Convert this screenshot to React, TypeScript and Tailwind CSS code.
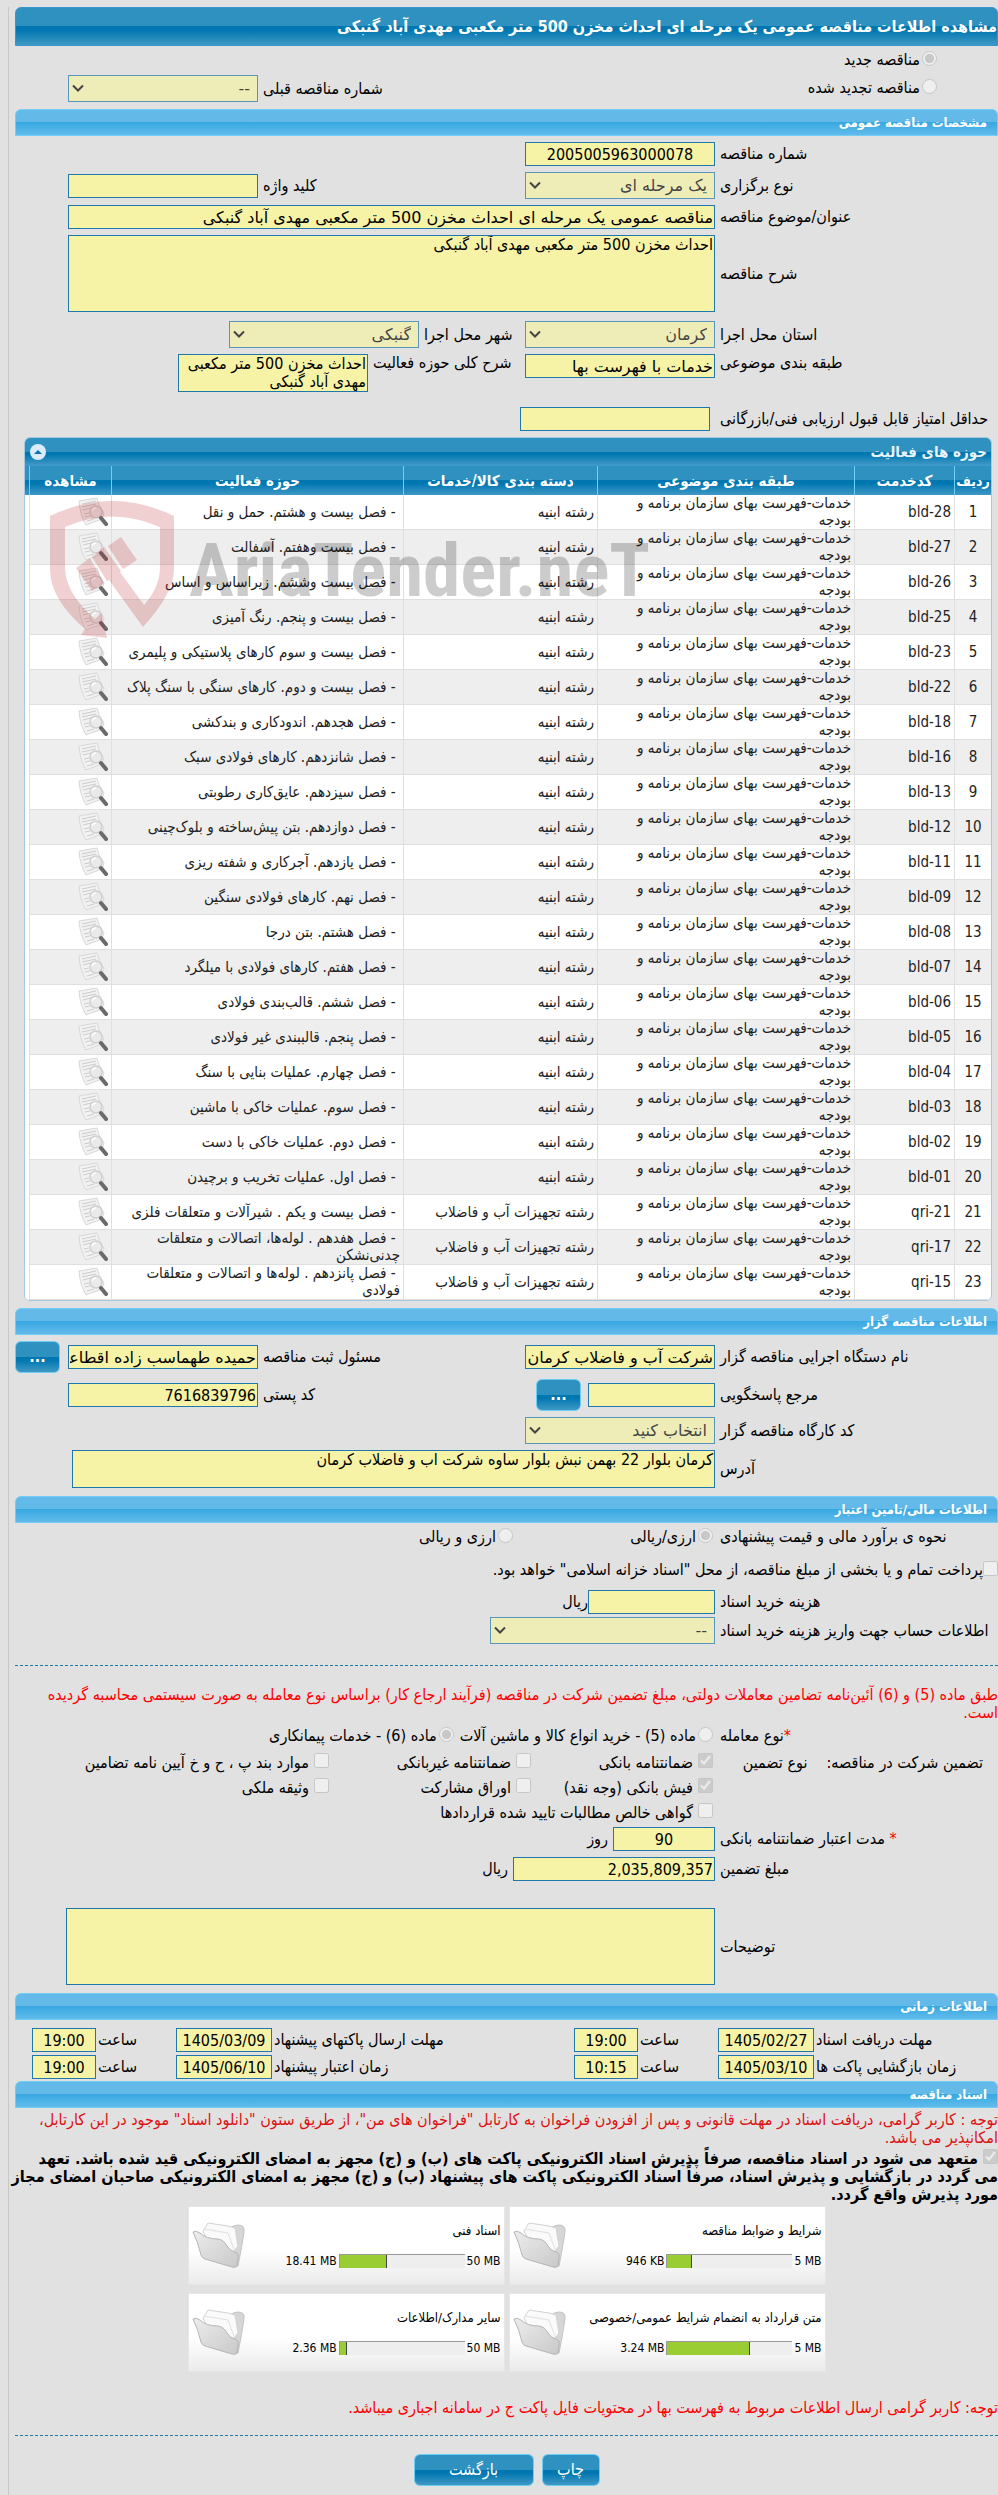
import type { ReactNode } from 'react';
import clsx from 'clsx';

const BUILDING = 'رشته ابنیه';
const WATER = 'رشته تجهیزات آب و فاضلاب';

const activities = [
  { code: 'bld-28', group: BUILDING, title: 'فصل بیست و هشتم. حمل و نقل' },
  { code: 'bld-27', group: BUILDING, title: 'فصل بیست وهفتم. آسفالت' },
  { code: 'bld-26', group: BUILDING, title: 'فصل بیست وششم. زیراساس و اساس' },
  { code: 'bld-25', group: BUILDING, title: 'فصل بیست و پنجم. رنگ آمیزی' },
  { code: 'bld-23', group: BUILDING, title: 'فصل بیست و سوم کارهای پلاستیکی و پلیمری' },
  { code: 'bld-22', group: BUILDING, title: 'فصل بیست و دوم. کارهای سنگی با سنگ پلاک' },
  { code: 'bld-18', group: BUILDING, title: 'فصل هجدهم. اندودکاری و بندکشی' },
  { code: 'bld-16', group: BUILDING, title: 'فصل شانزدهم. کارهای فولادی سبک' },
  { code: 'bld-13', group: BUILDING, title: 'فصل سیزدهم. عایق‌کاری رطوبتی' },
  { code: 'bld-12', group: BUILDING, title: 'فصل دوازدهم. بتن پیش‌ساخته و بلوک‌چینی' },
  { code: 'bld-11', group: BUILDING, title: 'فصل یازدهم. آجرکاری و شفته ریزی' },
  { code: 'bld-09', group: BUILDING, title: 'فصل نهم. کارهای فولادی سنگین' },
  { code: 'bld-08', group: BUILDING, title: 'فصل هشتم. بتن درجا' },
  { code: 'bld-07', group: BUILDING, title: 'فصل هفتم. کارهای فولادی با میلگرد' },
  { code: 'bld-06', group: BUILDING, title: 'فصل ششم. قالب‌بندی فولادی' },
  { code: 'bld-05', group: BUILDING, title: 'فصل پنجم. قالببندی غیر فولادی' },
  { code: 'bld-04', group: BUILDING, title: 'فصل چهارم. عملیات بنایی با سنگ' },
  { code: 'bld-03', group: BUILDING, title: 'فصل سوم. عملیات خاکی با ماشین' },
  { code: 'bld-02', group: BUILDING, title: 'فصل دوم. عملیات خاکی با دست' },
  { code: 'bld-01', group: BUILDING, title: 'فصل اول. عملیات تخریب و برچیدن' },
  { code: 'qri-21', group: WATER, title: 'فصل بیست و یکم . شیرآلات و متعلقات فلزی' },
  { code: 'qri-17', group: WATER, title: 'فصل هفدهم . لوله‌ها، اتصالات و متعلقات چدنی‌نشکن' },
  { code: 'qri-15', group: WATER, title: 'فصل پانزدهم . لوله‌ها و اتصالات و متعلقات فولادی' },
];

const guarantees = [
  { label: 'ضمانتنامه بانکی', checked: true },
  { label: 'ضمانتنامه غیربانکی', checked: false },
  { label: 'موارد بند پ ، ح و خ آیین نامه تضامین', checked: false },
  { label: 'فیش بانکی (وجه نقد)', checked: true },
  { label: 'اوراق مشارکت', checked: false },
  { label: 'وثیقه ملکی', checked: false },
  { label: 'گواهی خالص مطالبات تایید شده قراردادها', checked: false, wide: true },
];

const documents = [
  { title: 'شرایط و ضوابط مناقصه', used: '946 KB', max: '5 MB', percent: 20 },
  { title: 'اسناد فنی', used: '18.41 MB', max: '50 MB', percent: 38 },
  { title: 'متن قرارداد به انضمام شرایط عمومی/خصوصی', used: '3.24 MB', max: '5 MB', percent: 66 },
  { title: 'سایر مدارک/اطلاعات', used: '2.36 MB', max: '50 MB', percent: 6 },
];

const DARK_BAR = 'bg-[linear-gradient(#2f91bf,#2f91bf_50%,#0077b1_50%,#0077b1_60%,#4098c4)]';

const FIELD = 'border border-[#1f78ab] bg-[#f6f3a6] px-px text-black outline-none';

const WIDE = "font-['DejaVu_Sans',sans-serif]";

const Section = ({ children, className }: { children: ReactNode; className?: string }) => (
  <h2
    className={clsx(
      'flex h-[27px] items-center rounded-t-md border border-[#74cdf6] bg-[linear-gradient(#63b9e8,#63b9e8_48%,#38a8e2_50%,#62bbea)] px-[10px] text-[13px] font-bold text-white',
      className,
    )}
  >
    {children}
  </h2>
);

const Row = ({ children, className }: { children: ReactNode; className?: string }) => (
  <div className={clsx('mt-[6px] flex', className || 'items-center')}>{children}</div>
);

// Label column on the right side of every form row
const Label = ({ id, children }: { id: string; children: ReactNode }) => (
  <label htmlFor={id} className="me-[5px] w-[278px] shrink-0 whitespace-nowrap text-left">
    {children}
  </label>
);

const Side = ({ children, className }: { children: ReactNode; className?: string }) => (
  <div className={clsx('ms-auto flex items-center gap-[5px]', className || 'me-[53px]')}>{children}</div>
);

const Input = ({ id, value = '', className }: { id: string; value?: string; className?: string }) => (
  <input
    id={id}
    type="text"
    readOnly
    defaultValue={value}
    className={clsx('h-6 shrink-0 pt-[2px] text-base', FIELD, className || 'w-[190px]')}
  />
);

const Select = ({ id, value, className }: { id: string; value: string; className?: string }) => (
  <div className={clsx('relative h-[27px] shrink-0', className || 'w-[190px]')}>
    <select
      id={id}
      disabled
      className={clsx(
        'h-full w-full appearance-none border border-[#1f78ab] bg-[#f6f3a6] px-[7px] text-base text-black opacity-70',
        WIDE,
      )}
    >
      <option>{value}</option>
    </select>
    <svg className="pointer-events-none absolute left-1 top-2 h-[10px] w-3" viewBox="0 0 12 10">
      <path d="M1 2.5 L6 7.5 L11 2.5" fill="none" stroke="#444" strokeWidth="2" />
    </svg>
  </div>
);

const Choice = ({
  type,
  name,
  checked,
  children,
  className,
}: {
  type: 'radio' | 'checkbox';
  name?: string;
  checked?: boolean;
  children: ReactNode;
  className?: string;
}) => (
  <label className={clsx('flex items-center whitespace-nowrap', className || 'gap-[2px]')}>
    <input
      type={type}
      name={name}
      defaultChecked={checked}
      disabled
      className={clsx(
        'mb-1 h-[15px] w-[15px] shrink-0',
        type === 'radio' &&
          'appearance-none rounded-full border border-[#c6c6c6] bg-[#efefef] checked:bg-[radial-gradient(circle_closest-side,#c8c8c8_65%,#efefef_78%)]',
      )}
    />
    {children}
  </label>
);

const Button = ({ children, className }: { children: ReactNode; className?: string }) => (
  <button type="button" className={clsx('h-8 rounded-md border border-[#6fcdf5] text-white', DARK_BAR, className)}>
    {children}
  </button>
);

const Divider = () => <hr className="border-0 border-t border-dashed border-[#1f78ab]" />;

const ViewIcon = () => (
  <svg width="30" height="30" viewBox="0 0 30 30" fill="none">
    <path d="M1 4 L19 1 Q20 8 26 16 L24 22 Q16 25 8 28 Q2 18 1 4Z" fill="#f2f2f2" stroke="#d8d8d8" />
    <path d="M4 7l14-3M4 10l14-3M5 13l8-2M6 17l5-1M7 20l5-1M9 24l7-2" stroke="#cccccc" />
    <circle cx="18" cy="15" r="6" fill="#eaeaea" stroke="#cfcfcf" strokeWidth="1.5" />
    <path d="M14 14a4 4 0 0 1 4-3" stroke="#fff" strokeWidth="1.5" />
    <path d="M23 21 L28 27" stroke="#6a6a6a" strokeWidth="4" strokeLinecap="round" />
  </svg>
);

const FolderIcon = () => (
  <svg width="54" height="48" viewBox="0 0 54 48" fill="none">
    <defs>
      <linearGradient id="folderFront" x1="0" y1="0" x2="1" y2="1">
        <stop offset="0" stopColor="#ececec" />
        <stop offset="1" stopColor="#c9c9c9" />
      </linearGradient>
    </defs>
    <path d="M12 8 L38 6 Q42 3 46 3 Q53 3 52 10 Q50 24 46 44 Q44 46 40 42Z" fill="#d6d6d6" stroke="#c4c4c4" />
    <path d="M11 9 Q14 4 16 1 L36 4 L43 6 L46 24 L38 34 L16 20Z" fill="#fafafa" stroke="#d2d2d2" />
    <path d="M12 7 L36 11 L43 30" stroke="#e0e0e0" />
    <path
      d="M1 10 Q4 8 8 11 Q14 17 26 17 Q32 18 35 24 Q38 29 43 30 Q47 31 46 36 L45 44 Q44 46 40 45 L13 37 Q10 36 9 33 Q6 20 1 10Z"
      fill="url(#folderFront)"
      stroke="#b5b5b5"
    />
  </svg>
);

const Watermark = () => (
  <div dir="ltr" className="pointer-events-none absolute left-[25px] top-[63px] flex items-center gap-[14px]">
    <svg width="125" height="138" viewBox="0 0 125 138" fill="#b5121b" fillOpacity=".2" className="shrink-0">
      <path d="M0 15 Q62 -15 124 15 V68 Q124 92 93 126 L59 79 L57 80 L42 56 L54 46 L71 70 L70 71 L94 104 Q110 86 110 66 V26 Q62 5 15 26 V66 Q15 92 45 118 L51 112 L57 137 L31 134 L35 128 Q0 98 0 68Z" />
      <path d="M26 67 L40 57 L54 82 L42 90Z" />
      <path d="M58 45 L71 36 L87 59 L73 68Z" />
    </svg>
    <span className="whitespace-nowrap font-['Liberation_Sans_Narrow','Roboto_Condensed','Liberation_Sans',sans-serif] text-[75px] font-bold leading-none text-black/20">
      AriaTender.neT
    </span>
  </div>
);

const headCell = 'h-[29px] border-l border-[#6cd0f7] p-0 text-center font-bold';
const cell = 'h-[35px] border-b border-l border-[#dfdfdf] px-[3px] py-0 leading-[17px]';

const ActivityTable = () => (
  <div className="relative ml-[9px] mr-[6px] mt-[6px] overflow-hidden rounded-md border border-[#a5c9e2] bg-white text-[15px]">
    <div className={clsx('flex h-7 items-center justify-between border-b border-[#3f97d3] pl-[5px] pr-1 text-[#e8f3fb]', DARK_BAR)}>
      <h3 className="font-bold">حوزه های فعالیت</h3>
      <button type="button" aria-label="بستن" className="flex h-4 w-4 items-center justify-center rounded-full bg-[#dcebf9]">
        <svg width="8" height="5" viewBox="0 0 8 5">
          <path d="M0 5 L4 1 L8 5Z" fill="#0d72aa" />
        </svg>
      </button>
    </div>
    <table className="w-full table-fixed border-separate border-spacing-0 text-[#222]">
      <thead>
        <tr className={clsx('text-white', DARK_BAR)}>
          <th className={clsx(headCell, 'w-[37px] text-sm')}>ردیف</th>
          <th className={clsx(headCell, 'w-[100px]')}>کدخدمت</th>
          <th className={clsx(headCell, 'w-[257px]')}>طبقه بندی موضوعی</th>
          <th className={clsx(headCell, 'w-[194px]')}>دسته بندی کالا/خدمات</th>
          <th className={headCell}>حوزه فعالیت</th>
          <th className={clsx(headCell, 'w-[82px]')}>مشاهده</th>
          <td className="w-1" />
        </tr>
      </thead>
      <tbody>
        {activities.map((item, index) => (
          <tr key={item.code} className={index % 2 ? 'bg-[#eeeeee]' : 'bg-white'}>
            <td className={clsx(cell, 'text-center')}>{index + 1}</td>
            <td className={cell}>{item.code}</td>
            <td className={cell}>
              خدمات-فهرست بهای سازمان برنامه و
              <br />
              بودجه
            </td>
            <td className={cell}>{item.group}</td>
            <td className={cell}>&nbsp;- {item.title}</td>
            <td className={cell}>
              <a href="#" aria-label={`مشاهده ${item.code}`} className="block">
                <ViewIcon />
              </a>
            </td>
            <td className="bg-white" />
          </tr>
        ))}
      </tbody>
    </table>
    <Watermark />
  </div>
);

const TimeRow = ({
  id,
  first,
  second,
}: {
  id: string;
  first: [string, string, string];
  second: [string, string, string];
}) => (
  <div className="mt-[3px] flex items-center gap-[2px] pl-[17px]">
    <label htmlFor={`${id}-d1`} className="w-[182px] whitespace-nowrap text-left">{first[0]}</label>
    <Input id={`${id}-d1`} value={first[1]} className="w-24 text-center" />
    <label htmlFor={`${id}-t1`} className="w-[76px] text-left">ساعت</label>
    <Input id={`${id}-t1`} value={first[2]} className="w-16 text-center" />
    <label htmlFor={`${id}-d2`} className="flex-1 whitespace-nowrap text-left">{second[0]}</label>
    <Input id={`${id}-d2`} value={second[1]} className="w-24 text-center" />
    <label htmlFor={`${id}-t2`} className="w-[76px] text-left">ساعت</label>
    <Input id={`${id}-t2`} value={second[2]} className="w-16 text-center" />
  </div>
);

const App = () => {
  return (
    <div
      dir="rtl"
      className="overflow-hidden bg-[#e1e1e1] pl-2 pt-[7px] font-['DejaVu_Sans_Condensed','DejaVu_Sans',sans-serif] text-base leading-[18px] text-black"
    >
      <main className="border-l border-[#c8c8c8] pb-[9px] pl-[6px]">
        <h1 className={clsx('flex h-[39px] items-center whitespace-nowrap rounded-t-md border border-[#3a94d0] font-bold text-white', DARK_BAR)}>
          مشاهده اطلاعات مناقصه عمومی یک مرحله ای احداث مخزن 500 متر مکعبی مهدی آباد گنبکی
        </h1>

        <div className="flex items-end pr-[61px]">
          <div>
            <Choice type="radio" name="kind" checked className="h-7 gap-[2px]">مناقصه جدید</Choice>
            <Choice type="radio" name="kind" className="h-7 gap-[2px]">مناقصه تجدید شده</Choice>
          </div>
          <Side>
            <label htmlFor="previous">شماره مناقصه قبلی</label>
            <Select id="previous" value="--" />
          </Side>
        </div>

        <Section className="mt-[7px]">مشخصات مناقصه عمومی</Section>
        <Row>
          <Label id="number">شماره مناقصه</Label>
          <Input id="number" value="2005005963000078" className="w-[190px] text-center" />
        </Row>
        <Row>
          <Label id="method">نوع برگزاری</Label>
          <Select id="method" value="یک مرحله ای" />
          <Side>
            <label htmlFor="keyword">کلید واژه</label>
            <Input id="keyword" />
          </Side>
        </Row>
        <Row>
          <Label id="subject">عنوان/موضوع مناقصه</Label>
          <Input
            id="subject"
            value="مناقصه عمومی یک مرحله ای احداث مخزن 500 متر مکعبی مهدی آباد گنبکی"
            className={clsx('me-[53px] flex-1', WIDE)}
          />
        </Row>
        <Row>
          <Label id="description">شرح مناقصه</Label>
          <textarea
            id="description"
            readOnly
            defaultValue="احداث مخزن 500 متر مکعبی مهدی آباد گنبکی"
            className={clsx('me-[53px] h-[77px] flex-1 resize-none', FIELD)}
          />
        </Row>
        <Row className="items-center pt-[3px]">
          <Label id="province">استان محل اجرا</Label>
          <Select id="province" value="کرمان" />
          <label htmlFor="city" className="me-[5px] w-[101px] whitespace-nowrap text-left">شهر محل اجرا</label>
          <Select id="city" value="گنبکی" />
        </Row>
        <Row className="items-start">
          <Label id="category">طبقه بندی موضوعی</Label>
          <Input id="category" value="خدمات با فهرست بها" className={clsx('w-[190px]', WIDE)} />
          <label htmlFor="scope" className="me-[5px] w-[152px] whitespace-nowrap text-left">شرح کلی حوزه فعالیت</label>
          <textarea
            id="scope"
            readOnly
            defaultValue="احداث مخزن 500 متر مکعبی مهدی آباد گنبکی"
            className={clsx('h-[38px] w-[190px] resize-none overflow-hidden', FIELD)}
          />
        </Row>
        <Row className="items-center pt-[9px]">
          <Label id="score">حداقل امتیاز قابل قبول ارزیابی فنی/بازرگانی</Label>
          <Input id="score" className="ms-[5px] w-[190px]" />
        </Row>

        <ActivityTable />

        <Section className="mt-[7px]">اطلاعات مناقصه گزار</Section>
        <Row>
          <Label id="agency">نام دستگاه اجرایی مناقصه گزار</Label>
          <Input id="agency" value="شرکت آب و فاضلاب کرمان" className={clsx('w-[190px]', WIDE)} />
          <Side className="me-0">
            <label htmlFor="officer">مسئول ثبت مناقصه</label>
            <Input id="officer" value="حمیده طهماسب زاده اقطاعی" className={clsx('w-[190px]', WIDE)} />
            <Button className="ms-[3px] w-[45px] font-bold">...</Button>
          </Side>
        </Row>
        <Row>
          <Label id="contact">مرجع پاسخگویی</Label>
          <Input id="contact" className="w-[127px]" />
          <Button className="ms-[7px] w-[45px] font-bold">...</Button>
          <Side>
            <label htmlFor="postal">کد پستی</label>
            <Input id="postal" value="7616839796" />
          </Side>
        </Row>
        <Row>
          <Label id="workshop">کد کارگاه مناقصه گزار</Label>
          <Select id="workshop" value="انتخاب کنید" />
        </Row>
        <Row>
          <Label id="address">آدرس</Label>
          <textarea
            id="address"
            readOnly
            defaultValue="کرمان بلوار 22 بهمن نبش بلوار ساوه شرکت اب و فاضلاب کرمان"
            className={clsx('me-[57px] h-[38px] flex-1 resize-none', FIELD)}
          />
        </Row>

        <Section className="mt-2">اطلاعات مالی/تامین اعتبار</Section>
        <div className="flex h-7 items-center">
          <span className="me-[7px] w-[278px] text-left">نحوه ی برآورد مالی و قیمت پیشنهادی</span>
          <Choice type="radio" name="currency" checked className="w-[200px] gap-[2px]">ارزی/ریالی</Choice>
          <Choice type="radio" name="currency">ارزی و ریالی</Choice>
        </div>
        <div className="mt-[5px] flex h-7 items-center">
          <Choice type="checkbox" className="gap-0">
            پرداخت تمام و یا بخشی از مبلغ مناقصه، از محل &quot;اسناد خزانه اسلامی&quot; خواهد بود.
          </Choice>
        </div>
        <Row>
          <Label id="fee">هزینه خرید اسناد</Label>
          <Input id="fee" className="w-[127px]" />
          <span>ریال</span>
        </Row>
        <div className="mt-[3px] flex items-center">
          <Label id="account">اطلاعات حساب جهت واریز هزینه خرید اسناد</Label>
          <Select id="account" value="--" className="w-[225px]" />
        </div>

        <div className="mt-[21px]">
          <Divider />
        </div>
        <p className="mt-5 pl-2 text-[#ff0000]">
          طبق ماده (5) و (6) آئین‌نامه تضامین معاملات دولتی، مبلغ تضمین شرکت در مناقصه (فرآیند ارجاع کار) براساس نوع معامله به صورت سیستمی محاسبه گردیده است.
        </p>
        <div className="flex h-7 items-center">
          <span className="me-[7px] w-[278px] text-left">
            <span className="text-[#ff0000]">*</span>نوع معامله
          </span>
          <Choice type="radio" name="deal" className="me-[6px] gap-[2px]">ماده (5) - خرید انواع کالا و ماشین آلات</Choice>
          <Choice type="radio" name="deal" checked>ماده (6) - خدمات پیمانکاری</Choice>
        </div>
        <div className="flex items-start">
          <div className="flex h-[25px] w-[285px] shrink-0 items-center gap-[19px] whitespace-nowrap pr-[15px]">
            <span>تضمین شرکت در مناقصه:</span>
            <span>نوع تضمین</span>
          </div>
          <div className="grid flex-1 grid-cols-[182px_202px_1fr]">
            {guarantees.map((item) => (
              <Choice
                key={item.label}
                type="checkbox"
                checked={item.checked}
                className={clsx('h-[25px] gap-[5px]', item.wide && 'col-span-2')}
              >
                {item.label}
              </Choice>
            ))}
          </div>
        </div>
        <div className="mt-[2px] flex items-center">
          <Label id="validity">
            <span className="text-[#ff0000]">*</span> مدت اعتبار ضمانتنامه بانکی
          </Label>
          <Input id="validity" value="90" className="me-[5px] w-[102px] text-center" />
          <span>روز</span>
        </div>
        <Row>
          <Label id="amount">مبلغ تضمین</Label>
          <Input id="amount" value="2,035,809,357" className="me-[5px] w-[202px]" />
          <span>ریال</span>
        </Row>
        <div className="mt-[27px] flex items-center">
          <Label id="notes">توضیحات</Label>
          <textarea id="notes" readOnly className={clsx('me-[51px] h-[77px] flex-1 resize-none', FIELD)} />
        </div>

        <Section className="mt-2">اطلاعات زمانی</Section>
        <div className="pt-[5px]">
          <TimeRow
            id="time-a"
            first={['مهلت دریافت اسناد', '1405/02/27', '19:00']}
            second={['مهلت ارسال پاکتهای پیشنهاد', '1405/03/09', '19:00']}
          />
          <TimeRow
            id="time-b"
            first={['زمان بازگشایی پاکت ها', '1405/03/10', '10:15']}
            second={['زمان اعتبار پیشنهاد', '1405/06/10', '19:00']}
          />
        </div>

        <Section className="mt-[2px]">اسناد مناقصه</Section>
        <p className="mt-[3px] text-[#dd1111]">
          توجه : کاربر گرامی، دریافت اسناد در مهلت قانونی و پس از افزودن فراخوان به کارتابل &quot;فراخوان های من&quot;، از طریق ستون &quot;دانلود اسناد&quot; موجود در این کارتابل، امکانپذیر می باشد.
        </p>
        <label className="mt-[2px] block whitespace-nowrap font-bold">
          <input type="checkbox" defaultChecked disabled className="me-[5px] h-[15px] w-[15px]" />
          متعهد می شود در اسناد مناقصه، صرفاً پذیرش اسناد الکترونیکی پاکت های (ب) و (ج) مجهز به امضای الکترونیکی قید شده باشد. تعهد
          <br />
          می گردد در بازگشایی و پذیرش اسناد، صرفاً اسناد الکترونیکی پاکت های پیشنهاد (ب) و (ج) مجهز به امضای الکترونیکی صاحبان امضای مجاز
          <br />
          مورد پذیرش واقع گردد.
        </label>

        <div className="mt-[2px] grid grid-cols-[317px_317px] justify-center gap-x-1 gap-y-2">
          {documents.map((doc) => (
            <div
              key={doc.title}
              className="flex h-[79px] items-center justify-between border border-[#e6e6e6] bg-[linear-gradient(#ffffff,#ffffff_55%,#ebebeb)] px-[3px] text-xs"
            >
              <div className="flex flex-col gap-[13px]">
                <span className="whitespace-nowrap text-[13px]">{doc.title}</span>
                <div className="flex items-center gap-[2px]">
                  <span dir="ltr">{doc.max}</span>
                  <div dir="ltr" className="h-[14px] w-[126px] border-l border-t border-[#9a9a9a] bg-[#eeeeee]">
                    <div className="h-full border-r border-[#444] bg-[#9acd32]" style={{ width: `${doc.percent}%` }} />
                  </div>
                  <span dir="ltr">{doc.used}</span>
                </div>
              </div>
              <FolderIcon />
            </div>
          ))}
        </div>

        <p className="mt-[27px] text-[#ff0000]">
          توجه: کاربر گرامی ارسال اطلاعات مربوط به فهرست بها در محتویات فایل پاکت ج در سامانه اجباری میباشد.
        </p>
        <div className="mt-[18px]">
          <Divider />
        </div>
        <div className="mt-[18px] flex justify-center gap-2">
          <Button className="w-[58px]">چاپ</Button>
          <Button className="w-[120px]">بازگشت</Button>
        </div>
      </main>
    </div>
  );
};

export default App;
